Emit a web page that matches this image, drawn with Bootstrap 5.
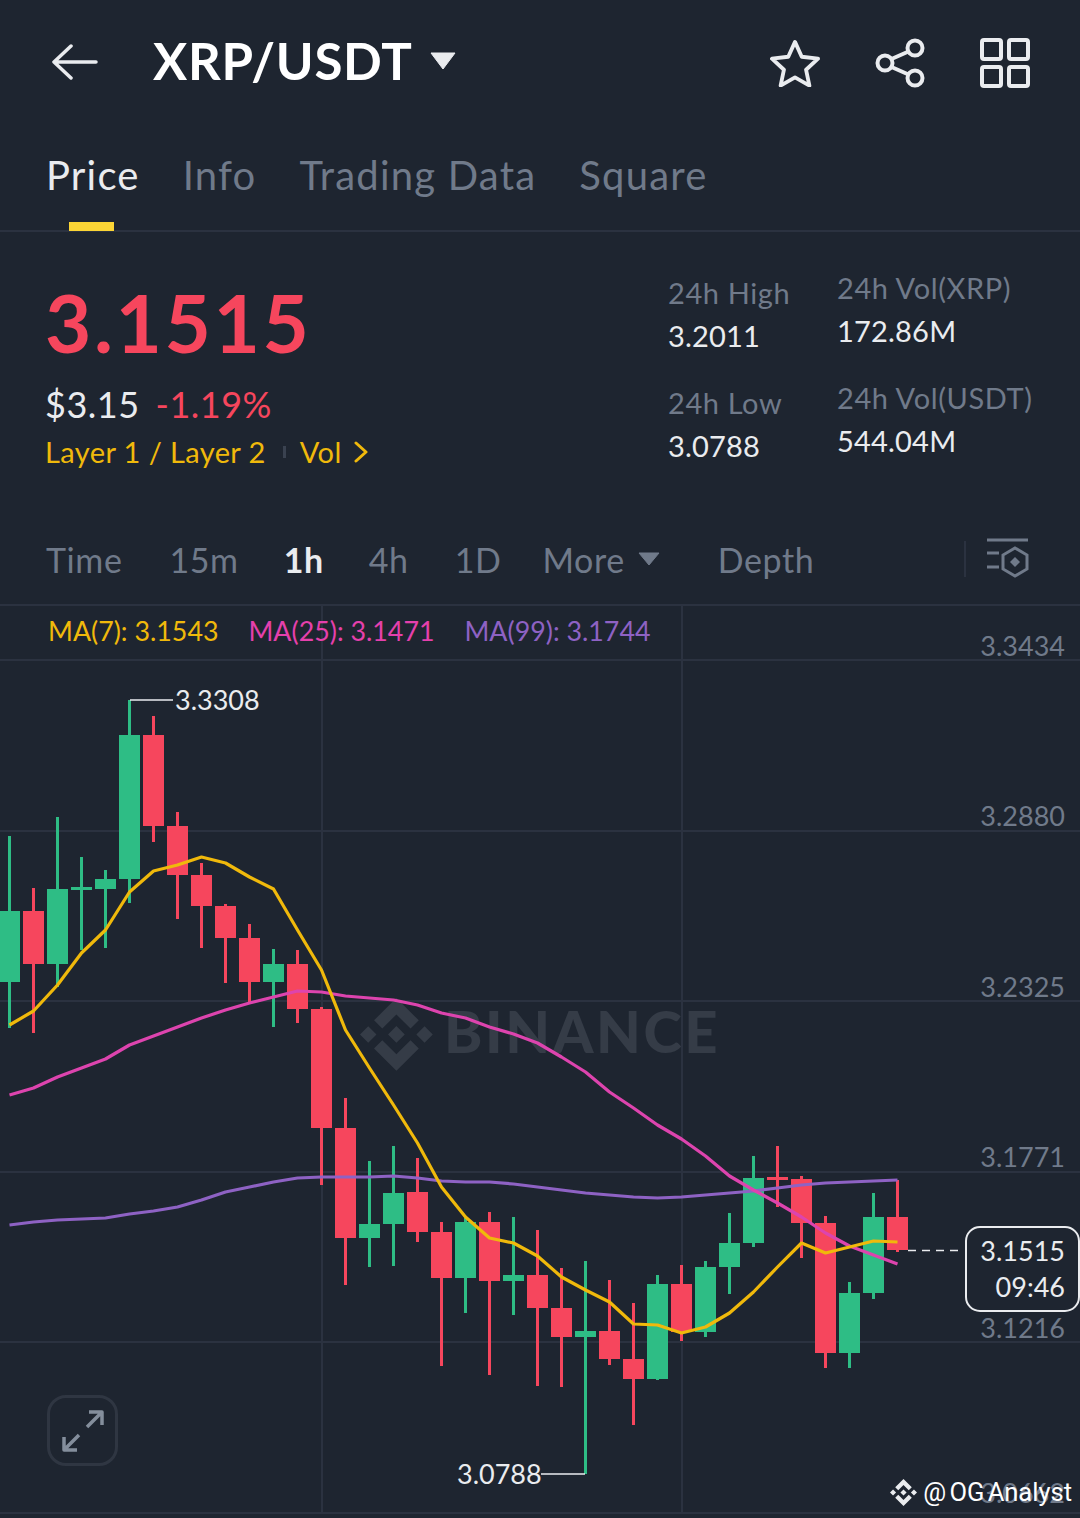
<!DOCTYPE html>
<html lang="en">

<head>
  <meta charset="UTF-8">
  <meta name="viewport" content="width=device-width, initial-scale=1.0">
  <title>XRP/USDT</title>
  <link href="https://cdn.jsdelivr.net/npm/bootstrap@5.3.6/dist/css/bootstrap.min.css" rel="stylesheet">
  <style>
    body {
      background: #1e2530;
      font-family: "Lato", "Liberation Sans", sans-serif;
      color: #eaecef;
      width: 1080px;
      height: 1518px;
      overflow: hidden;
    }

    .top-bar { height: 124px; padding: 0 50px 0 52px; }
    .pair-name { font-size: 51px; font-weight: 700; color: #fff; margin: -2px 0 0 55px; letter-spacing: .7px; }
    .pair-caret { margin-left: 17px; margin-top: -2px; }
    .top-icons { gap: 55px; margin-top: 2px; }

    .tab-row { height: 108px; padding-left: 46px; gap: 43px; border-bottom: 2px solid #2b3240; font-size: 40px; color: #707a8a; letter-spacing: 1.200px; }
    .tab-item { position: relative; padding-bottom: 4px; }
    .tab-item.on { color: #eaecef; }
    .tab-item.on::after { content: ""; position: absolute; left: 23px; bottom: -22px; width: 45px; height: 9px; background: #fcd535; }

    .stat-wrap { height: 289px; padding: 45px 0 0 45px; }
    .last-price { font-size: 80px; font-weight: 700; color: #f6465d; line-height: 90px; letter-spacing: 2.600px; }
    .fiat-line { font-size: 36px; margin-top: 15px; line-height: 44px; gap: 16px; letter-spacing: .5px; }
    .fiat-line .chg { color: #f6465d; }
    .tag-line { font-size: 29px; color: #f0b90b; line-height: 40px; margin-top: 6px; letter-spacing: .4px; }
    .tag-sep { width: 3px; height: 12px; background: #3a4250; margin: 0 14px 0 17px; }
    .tag-chev { margin-left: 12px; }

    .stat-cols { margin-top: -9px; }
    .stat-col { width: 169px; }
    .stat-col.shift { padding-top: 5px; }
    .stat-col.wide { width: 243px; }
    .stat-lab { font-size: 29px; color: #707a8a; line-height: 40px; letter-spacing: .6px; }
    .stat-val { font-size: 29px; color: #eaecef; line-height: 40px; margin-top: 3px; margin-bottom: 27px; letter-spacing: .2px; }

    .tf-row { height: 85px; padding: 0 0 7px 46px; border-bottom: 2px solid #2b3240; font-size: 34px; color: #707a8a; letter-spacing: .6px; }
    .tf-row span.tf { margin-right: 47px; }
    .tf-row span.tf-15m { margin-right: 45px; }
    .tf-row span.on { color: #eaecef; font-weight: 700; margin-right: 45px; }
    .tf-row span.tf-4h { margin-right: 46px; }
    .tf-row span.tf-1d { margin-right: 41px; }
    .tf-row span.more { margin-right: 58px; }
    .more-caret { margin-left: 13px; }
    .tf-sep { width: 2px; height: 36px; background: #2b3240; margin-right: 20px; }
    .tf-icon { margin-right: 50px; }

    .chart-box { position: relative; height: 912px; }
    .chart-box svg.plot { position: absolute; left: 0; top: 0; }
    .ma-row { position: absolute; left: 48px; top: 7px; font-size: 26.800px; line-height: 36px; }
    .ma-row span { margin-right: 30px; }
    .axis-txt { font-size: 27px; fill: #707a8a; }
    .mark-txt { font-size: 27px; fill: #eaecef; }
    .tag-txt { font-size: 27px; fill: #eaecef; }
    .wm-txt { font-size: 58px; font-weight: 900; fill: #353c47; letter-spacing: 2.600px; }

    .expand-btn { position: absolute; left: 47px; top: 789px; width: 71px; height: 71px; border: 3px solid #2f3642; border-radius: 19px; }
    .credit { position: absolute; right: 8px; top: 869px; font-family: "Roboto", sans-serif; font-size: 25.500px; color: #fff; line-height: 34px; gap: 6px; word-spacing: -3px; }
  </style>
</head>

<body>

  <!-- top bar -->
  <div class="top-bar d-flex align-items-center justify-content-between">
    <div class="d-flex align-items-center">
      <svg width="46" height="36" viewBox="0 0 46 36" fill="none" stroke="#eaecef" stroke-width="3.500" stroke-linecap="round" stroke-linejoin="round"><path d="M44 18H2M19 2 2 18l17 16"/></svg>
      <span class="pair-name">XRP/USDT</span>
      <svg class="pair-caret" width="26" height="18" viewBox="0 0 26 18"><path d="M1 1h24L13 17z" fill="#eaecef" stroke="#eaecef" stroke-linejoin="round"/></svg>
    </div>
    <div class="d-flex align-items-center top-icons">
      <svg width="50" height="48" viewBox="0 0 52 50" fill="none" stroke="#eaecef" stroke-width="4" stroke-linejoin="round"><path d="M26 3l7 15.500 17 2-12.500 11.500 3.500 16.500L26 40l-15 8.500 3.500-16.500L2 20.500l17-2z"/></svg>
      <svg width="50" height="50" viewBox="0 0 50 50" fill="none" stroke="#eaecef" stroke-width="4"><circle cx="40" cy="10" r="7.500"/><circle cx="40" cy="40" r="7.500"/><circle cx="10" cy="25" r="7.500"/><path d="M16.500 21 33.500 13.500M16.500 29l17 7.500"/></svg>
      <svg width="50" height="50" viewBox="0 0 50 50" fill="none" stroke="#eaecef" stroke-width="4" stroke-linejoin="round"><rect x="2" y="2" width="19" height="19" rx="2"/><rect x="29" y="2" width="19" height="19" rx="2"/><rect x="2" y="29" width="19" height="19" rx="2"/><rect x="29" y="29" width="19" height="19" rx="2"/></svg>
    </div>
  </div>

  <!-- tabs -->
  <div class="tab-row d-flex align-items-center">
    <span class="tab-item on">Price</span>
    <span class="tab-item">Info</span>
    <span class="tab-item">Trading Data</span>
    <span class="tab-item">Square</span>
  </div>

  <!-- price and 24h stats -->
  <div class="stat-wrap d-flex justify-content-between">
    <div>
      <div class="last-price">3.1515</div>
      <div class="fiat-line d-flex"><span>$3.15</span><span class="chg">-1.19%</span></div>
      <div class="tag-line d-flex align-items-center">
        <span>Layer 1 / Layer 2</span><span class="tag-sep"></span><span>Vol</span>
        <svg class="tag-chev" width="14" height="22" viewBox="0 0 14 22" fill="none" stroke="#f0b90b" stroke-width="3" stroke-linecap="round" stroke-linejoin="round"><path d="M2 2l10 9-10 9"/></svg>
      </div>
    </div>
    <div class="d-flex stat-cols">
      <div class="stat-col shift">
        <div class="stat-lab">24h High</div>
        <div class="stat-val">3.2011</div>
        <div class="stat-lab">24h Low</div>
        <div class="stat-val">3.0788</div>
      </div>
      <div class="stat-col wide">
        <div class="stat-lab">24h Vol(XRP)</div>
        <div class="stat-val">172.86M</div>
        <div class="stat-lab">24h Vol(USDT)</div>
        <div class="stat-val">544.04M</div>
      </div>
    </div>
  </div>

  <!-- timeframe row -->
  <div class="tf-row d-flex align-items-center">
    <span class="tf">Time</span>
    <span class="tf tf-15m">15m</span>
    <span class="tf on">1h</span>
    <span class="tf tf-4h">4h</span>
    <span class="tf tf-1d">1D</span>
    <span class="tf more d-flex align-items-center">More
      <svg class="more-caret" width="22" height="14" viewBox="0 0 22 14"><path d="M1 1h20L11 13z" fill="#707a8a" stroke="#707a8a" stroke-linejoin="round"/></svg>
    </span>
    <span class="tf me-auto">Depth</span>
    <span class="tf-sep"></span>
    <svg class="tf-icon" width="44" height="42" viewBox="0 0 44 42" fill="none" stroke="#707a8a" stroke-width="3">
      <path d="M1 2h41M1 15h12M1 29h12"/>
      <path d="M29 10l12 7v14l-12 7-12-7V17z"/>
      <path d="M29 19l5 5-5 5-5-5z" fill="#707a8a" stroke="none"/>
    </svg>
  </div>

  <!-- chart -->
  <div class="chart-box">
    <svg class="plot" id="plot" width="1080" height="912" viewBox="0 606 1080 912" xmlns="http://www.w3.org/2000/svg">
      <g stroke="#2b3240" stroke-width="2">
        <path d="M0 660H1080M0 831H1080M0 1001H1080M0 1172H1080M0 1342H1080M0 1513H1080"/>
        <path d="M322 606V1513M682 606V1513"/>
      </g>

      <path transform="translate(360 998) scale(.575)" fill="#353c47" d="M38.730 53.200l24.590-24.580 24.600 24.600 14.300-14.310L63.320 0 24.430 38.900zM0 63.310l14.300-14.310 14.310 14.310-14.310 14.300zM38.730 73.410l24.590 24.590 24.600-24.600 14.310 14.290-38.900 38.910-38.910-38.880-.02-.02zM98 63.310l14.300-14.310 14.310 14.310-14.310 14.300zM77.830 63.300L63.320 48.780 52.590 59.510l-1.240 1.230-2.540 2.540 14.510 14.500 14.510-14.470z"/>
      <text class="wm-txt" x="444" y="1053">BINANCE</text>

      <g id="candles"></g>
      <g id="lines" fill="none" stroke-width="3.200" stroke-linejoin="round"></g>

      <g text-anchor="end">
        <text class="axis-txt" x="1065" y="656">3.3434</text>
        <text class="axis-txt" x="1065" y="826">3.2880</text>
        <text class="axis-txt" x="1065" y="997">3.2325</text>
        <text class="axis-txt" x="1065" y="1167">3.1771</text>
        <text class="axis-txt" x="1065" y="1338">3.1216</text>
        <text class="axis-txt" x="1065" y="1503">3.0662</text>
      </g>

      <path d="M130 700H173M541 1474H585" stroke="#eaecef" stroke-width="1.500"/>
      <text class="mark-txt" x="175" y="710">3.3308</text>
      <text class="mark-txt" x="457" y="1484">3.0788</text>

      <path d="M908 1250.500H962" stroke="#eaecef" stroke-width="1.500" stroke-dasharray="8 6"/>
      <rect x="966" y="1227" width="113" height="84" rx="14" fill="#1e2530" stroke="#eaecef" stroke-width="2"/>
      <text class="tag-txt" x="1065" y="1261" text-anchor="end">3.1515</text>
      <text class="tag-txt" x="1065" y="1297" text-anchor="end">09:46</text>
    </svg>

    <div class="ma-row d-flex">
      <span style="color: #f0b90b;">MA(7): 3.1543</span>
      <span style="color: #e540ac;">MA(25): 3.1471</span>
      <span style="color: #8e62c4;">MA(99): 3.1744</span>
    </div>

    <div class="expand-btn d-flex align-items-center justify-content-center">
      <svg width="46" height="46" viewBox="0 0 46 46" fill="none" stroke="#848e9c" stroke-width="3.500" stroke-linejoin="round"><path d="M27 19 41 5M29 4h13v13M19 27 5 41M4 29v13h13"/></svg>
    </div>

    <div class="credit d-flex align-items-center">
      <svg width="27" height="27" viewBox="0 0 126.610 126.610"><path fill="#eaecef" d="M38.730 53.200l24.590-24.580 24.600 24.600 14.300-14.310L63.320 0 24.430 38.900zM0 63.310l14.300-14.310 14.310 14.310-14.310 14.300zM38.730 73.410l24.590 24.590 24.600-24.600 14.310 14.290-38.900 38.910-38.910-38.880-.02-.02zM98 63.310l14.300-14.310 14.310 14.310-14.310 14.300zM77.830 63.300L63.320 48.780 52.590 59.510l-1.240 1.230-2.540 2.540 14.510 14.500 14.510-14.470z"/></svg>
      <span>@ OG Analyst</span>
    </div>
  </div>

  <script src="https://cdn.jsdelivr.net/npm/bootstrap@5.3.6/dist/js/bootstrap.bundle.min.js"></script>
  <script>
    // [wick top, wick bottom, body top, body bottom, up?]
    const candles = [
      [836, 1028, 911, 982, 1], [888, 1033, 911, 964, 0], [817, 987, 889, 964, 1], [857, 950, 887, 890, 1],
      [870, 948, 879, 889, 1], [700, 903, 735, 879, 1], [716, 842, 735, 826, 0], [812, 919, 826, 875, 0],
      [863, 948, 875, 906, 0], [904, 983, 906, 938, 0], [924, 1003, 938, 982, 0], [949, 1027, 964, 982, 1],
      [950, 1023, 964, 1009, 0], [1007, 1185, 1009, 1128, 0], [1098, 1285, 1128, 1238, 0], [1161, 1267, 1224, 1238, 1],
      [1146, 1266, 1193, 1224, 1], [1158, 1242, 1192, 1232, 0], [1222, 1366, 1232, 1278, 0], [1218, 1313, 1222, 1278, 1],
      [1212, 1375, 1222, 1281, 0], [1217, 1315, 1275, 1281, 1], [1230, 1386, 1275, 1308, 0], [1268, 1387, 1308, 1337, 0],
      [1261, 1474, 1331, 1337, 1], [1280, 1365, 1331, 1359, 0], [1303, 1425, 1359, 1379, 0], [1275, 1380, 1284, 1379, 1],
      [1265, 1341, 1284, 1332, 0], [1261, 1337, 1267, 1332, 1], [1213, 1294, 1243, 1267, 1], [1156, 1247, 1178, 1243, 1],
      [1146, 1207, 1177, 1180, 0], [1176, 1258, 1179, 1223, 0], [1216, 1368, 1223, 1353, 0], [1282, 1368, 1293, 1353, 1],
      [1193, 1299, 1217, 1293, 1], [1180, 1252, 1217, 1250, 0]
    ];
    const ma7 = [1025, 1011, 985, 953, 930, 892, 871, 865, 857, 863, 877, 889, 930, 970, 1030, 1068, 1105, 1143, 1187, 1217, 1238, 1243, 1256, 1277, 1290, 1302, 1324, 1325, 1333, 1327, 1313, 1292, 1267, 1243, 1253, 1247, 1241, 1242];
    const ma25 = [1095, 1088, 1077, 1068, 1059, 1045, 1036, 1027, 1018, 1010, 1003, 997, 991, 992, 996, 998, 1000, 1005, 1013, 1018, 1027, 1034, 1043, 1057, 1072, 1092, 1108, 1125, 1139, 1156, 1176, 1190, 1203, 1217, 1233, 1246, 1255, 1264];
    const ma99 = [1225, 1222, 1220, 1219, 1218, 1214, 1211, 1207, 1200, 1192, 1187, 1182, 1178, 1177, 1177, 1177, 1176, 1178, 1181, 1182, 1182, 1184, 1187, 1190, 1193, 1195, 1197, 1198, 1197, 1195, 1193, 1191, 1188, 1185, 1183, 1182, 1181, 1180];

    const colX = i => 9.5 + i * 24;
    let html = "";
    candles.forEach((c, i) => {
      const col = c[4] ? "#2ebd85" : "#f6465d";
      const x = colX(i);
      html += `<rect x="${x - 1.5}" y="${c[0]}" width="3" height="${c[1] - c[0]}" fill="${col}"/>`;
      html += `<rect x="${x - 10.5}" y="${c[2]}" width="21" height="${c[3] - c[2]}" fill="${col}"/>`;
    });
    document.getElementById("candles").innerHTML = html;

    const toLine = (ys, col) => `<polyline stroke="${col}" points="${ys.map((y, i) => colX(i) + "," + y).join(" ")}"/>`;
    document.getElementById("lines").innerHTML = toLine(ma99, "#8e62c4") + toLine(ma25, "#dd44ae") + toLine(ma7, "#f0b90b");
  </script>
</body>

</html>
